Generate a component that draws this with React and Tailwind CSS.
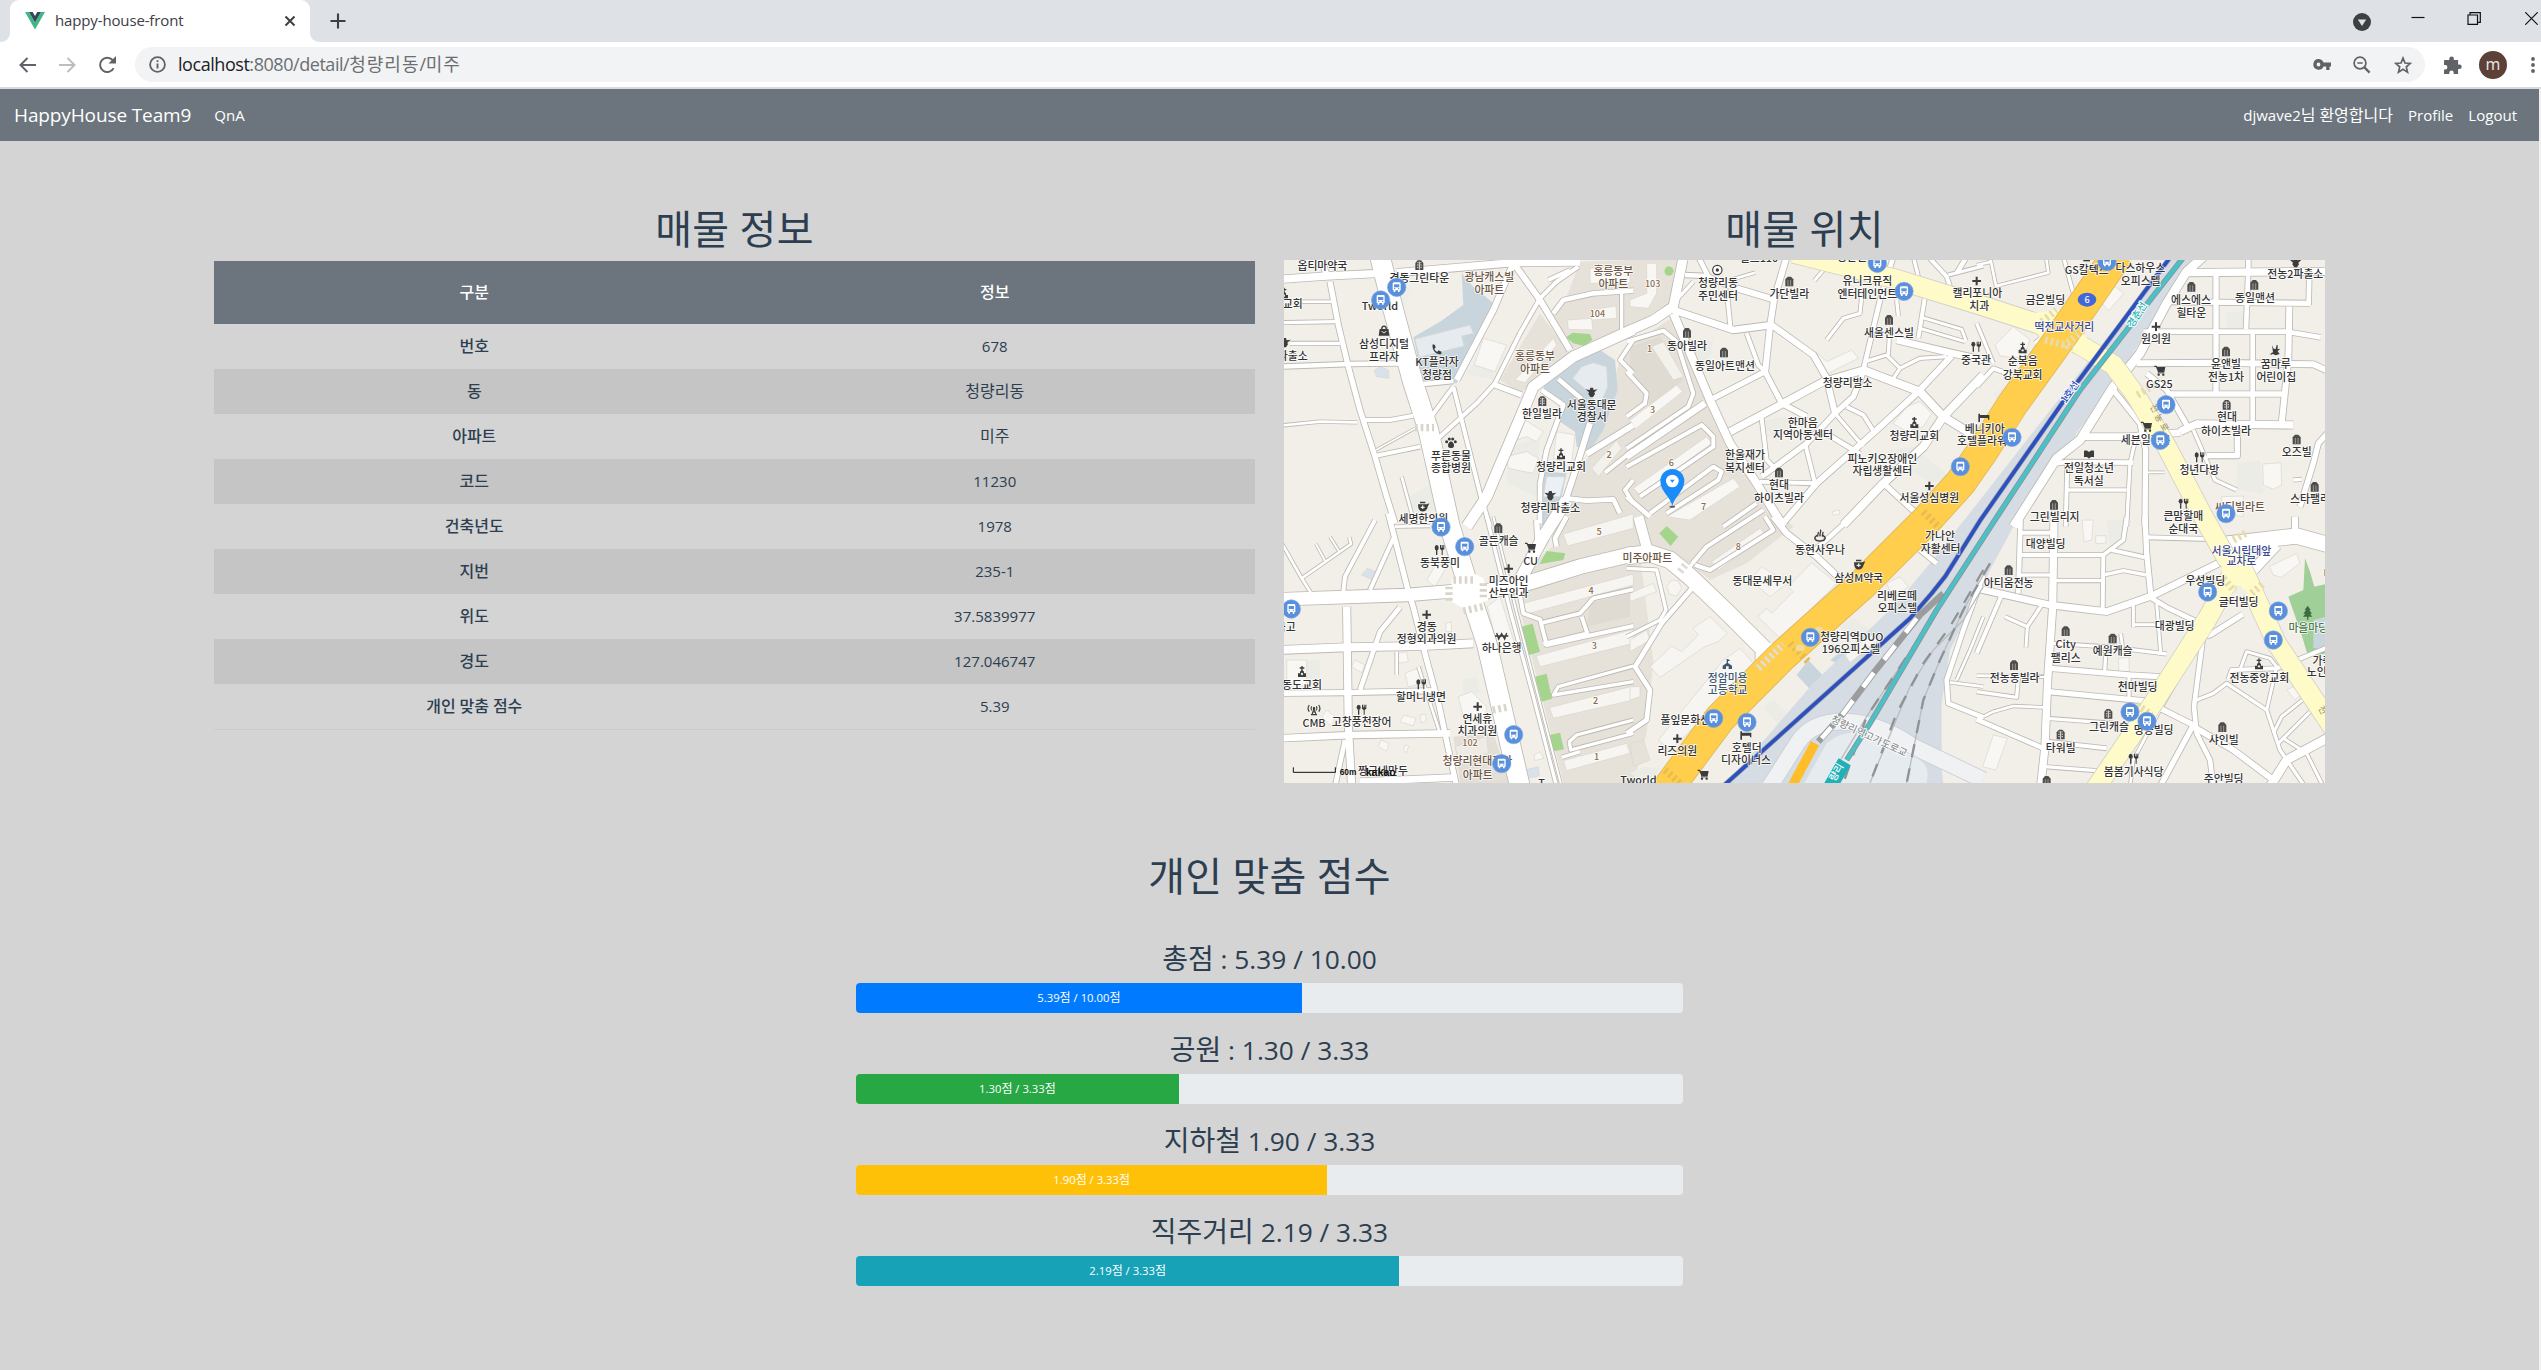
import React from "react";

const SANS = "font-['Open_Sans','Noto_Sans_CJK_KR',sans-serif]";

/* Latin runs are set slightly smaller than the Hangul beside them. */
function Mixed({ children }) {
  const runs = String(children).split(/([\uac00-\ud7a3]+)/).filter(Boolean);
  return (
    <span className="whitespace-pre">
      {runs.map((r, i) =>
        /[\uac00-\ud7a3]/.test(r) ? <span key={i}>{r}</span> : <span key={i} className="text-[0.94em]">{r}</span>
      )}
    </span>
  );
}

/* ------------------------------- browser ------------------------------- */

function TabStrip() {
  return (
    <div className="flex h-[42px] w-full items-end justify-between bg-[#dee1e6]">
      <div className="flex h-full items-end">
        <div className="h-2.5 w-2.5 bg-white">
          <div className="h-full w-full rounded-br-[9px] bg-[#dee1e6]" />
        </div>
        <div className="flex h-full w-[300px] items-center rounded-t-[9px] bg-white pl-[15px] pr-[14px]">
          <svg width="20" height="18" viewBox="0 0 20 18">
            <path d="M0 0h4l6 10.4L16 0h4L10 17.5z" fill="#41b883" />
            <path d="M4 0h3.7L10 4l2.300-4H16l-6 10.400z" fill="#35495e" />
          </svg>
          <span className="ml-[10px] flex-1 pb-px text-[15px] tracking-[-0.14px] text-[#3c4043]">happy-house-front</span>
          <svg width="12" height="12" viewBox="0 0 12 12" stroke="#3c4043" strokeWidth="2">
            <path d="M1.500 1.500l9 9M10.500 1.500l-9 9" />
          </svg>
        </div>
        <div className="h-2.5 w-2.5 bg-white">
          <div className="h-full w-full rounded-bl-[9px] bg-[#dee1e6]" />
        </div>
        <svg className="mb-[13px] ml-[10px]" width="16" height="16" viewBox="0 0 16 16" stroke="#3c4043" strokeWidth="2.100">
          <path d="M8 .5v15M.5 8h15" />
        </svg>
      </div>
      <div className="flex h-full items-start">
        <svg className="mt-[13px]" width="18" height="18" viewBox="0 0 18 18">
          <circle cx="9" cy="9" r="9" fill="#3c4043" />
          <path d="M4.800 6.500h8.400L9 13z" fill="#dee1e6" />
        </svg>
        <svg className="ml-[40px] mt-[11px]" width="14" height="13" viewBox="0 0 14 13" stroke="#111" strokeWidth="1.200">
          <path d="M0.500 6.500h13" />
        </svg>
        <svg className="ml-[42px] mt-[12px]" width="14" height="13" viewBox="0 0 14 13" stroke="#111" strokeWidth="1.200" fill="none">
          <path d="M1 3h9.500v9.400H1zM3 3V.7h10.300v9.600h-2.600" />
        </svg>
        <svg className="ml-[44px] mt-[12px]" width="13" height="13" viewBox="0 0 13 13" stroke="#111" strokeWidth="1.200">
          <path d="M.3.3l12.400 12.400M12.700.3L.3 12.700" />
        </svg>
        <div className="w-[3px]" />
      </div>
    </div>
  );
}

function Toolbar() {
  return (
    <div className="flex h-[47px] w-full items-start border-b-2 border-[#d9dbdf] bg-white pt-[5px]">
      <div className="flex h-[35px] w-[135px] shrink-0 items-center pl-[19px]">
        <svg width="17" height="16" viewBox="0 0 17 16" stroke="#5f6368" strokeWidth="2" fill="none">
          <path d="M17 8H2M8.500 1L1.500 8l7 7" />
        </svg>
        <svg className="ml-[23px]" width="17" height="16" viewBox="0 0 17 16" stroke="#bcbfc2" strokeWidth="2" fill="none">
          <path d="M0 8h15M8.500 1l7 7-7 7" />
        </svg>
        <svg className="ml-[22px]" width="20" height="18" viewBox="0 0 20 18" stroke="#5f6368" strokeWidth="2" fill="none">
          <path d="M15.600 12.300A7.200 7.200 0 1 1 14.600 4" />
          <path d="M18 0v7.500h-7.500z" fill="#5f6368" stroke="none" />
        </svg>
      </div>
      <div className="flex h-[35px] flex-1 items-center rounded-full bg-[#f1f3f4] pl-[14px] pr-[13px]">
        <svg width="17" height="17" viewBox="0 0 17 17" fill="none" stroke="#5f6368">
          <circle cx="8.500" cy="8.500" r="7.400" strokeWidth="1.800" />
          <path d="M8.500 7.500v5M8.500 4.300v1.800" strokeWidth="1.900" />
        </svg>
        <span className="ml-[12px] flex-1 pb-px text-[18px] leading-[34px] tracking-[-0.45px] text-[#202124]">
          localhost<span className="text-[#6b6f73]">:8080/detail/</span>
          <span className="tracking-[1px] text-[#6b6f73]">청량리동</span>
          <span className="text-[#6b6f73]">/</span>
          <span className="tracking-[1px] text-[#6b6f73]">미주</span>
        </span>
        <svg width="18" height="11" viewBox="0 0 18 11">
          <path d="M5.500 0a5.300 5.300 0 0 1 5 3.600H18v3.800h-1.500V11h-3.300V7.400h-2.700A5.300 5.300 0 1 1 5.500 0zm0 3.600a1.900 1.900 0 1 0 0 3.800 1.900 1.900 0 0 0 0-3.800z" fill="#5f6368" />
        </svg>
        <svg className="ml-[22px]" width="18" height="18" viewBox="0 0 18 18" stroke="#5f6368" fill="none">
          <circle cx="7" cy="7" r="5.900" strokeWidth="1.700" />
          <path d="M4.300 7h5.400" strokeWidth="1.500" />
          <path d="M11.400 11.400l5.200 5.200" strokeWidth="2.200" />
        </svg>
        <svg className="ml-[23px]" width="18" height="18" viewBox="0 0 18 18" stroke="#5f6368" strokeWidth="1.700" fill="none">
          <path d="M9 2.100l2 4.900 5.300.4-4 3.500 1.200 5.200L9 13.300l-4.500 2.800 1.200-5.200-4-3.500L7 7z" />
        </svg>
      </div>
      <div className="flex h-[35px] w-[116px] shrink-0 items-center pl-[18px]">
        <svg width="19" height="18" viewBox="0 0 19 18">
          <path d="M2 4h4.300V2.700a2.300 2.300 0 0 1 4.600 0V4h4.200v4.400h1.300a2.300 2.300 0 0 1 0 4.600h-1.300V18h-4.400v-1.300a2.200 2.200 0 0 0-4.400 0V18H1v-4.500h1.200a2.200 2.200 0 0 0 0-4.400H1V5a1 1 0 0 1 1-1z" fill="#5f6368" />
        </svg>
        <div className="ml-[17px] flex h-7 w-7 items-center justify-center rounded-full bg-[#5d4037] pb-0.5 text-[16px] leading-none text-[#efebe9]">m</div>
        <svg className="ml-[24px]" width="4" height="16" viewBox="0 0 4 16" fill="#5f6368">
          <circle cx="2" cy="2" r="1.900" />
          <circle cx="2" cy="8" r="1.900" />
          <circle cx="2" cy="14" r="1.900" />
        </svg>
      </div>
    </div>
  );
}

function NavBar() {
  return (
    <nav className="flex h-[52px] items-center bg-[#6c757d] pl-[14px] pr-[22px] text-[16px] text-white">
      <span className="text-[19px] tracking-[-0.12px]">HappyHouse Team9</span>
      <span className="ml-[23px]"><Mixed>QnA</Mixed></span>
      <div className="ml-auto flex gap-[15px]">
        <Mixed>djwave2님 환영합니다</Mixed>
        <Mixed>Profile</Mixed>
        <Mixed>Logout</Mixed>
      </div>
    </nav>
  );
}

/* --------------------------------- map --------------------------------- */

/* The map is drawn in six cells, each 1050 x 810 units (three units per pixel). */
const CELLS = [
  {
    at: [0, 0],
    areas: [
      ["#e6e2da", "660,390 780,190 870,310 720,430"],
      ["#e6e2da", "900,35 1050,30 1050,230 870,300 815,200 860,140"],
      ["#edeee8", "300,30 360,60 400,130 345,200"],
      ["#c9d5dd", "545,70 580,110 640,160 590,290 530,400 430,400 400,262 480,215 550,165"],
      ["#c9d5dd", "870,320 960,300 1005,330 1013,420 970,540 930,600 890,590 885,545 832,510 850,470 790,410"],
      ["#c9d5dd", "795,665 860,670 830,810 775,810"],
      ["#a5d58c", "858,262 878,248 930,252 937,270 912,288 880,280"],
      ["#ebece6", "590,330 650,340 640,390 560,370"],
      ["#ebece6", "690,590 780,560 770,740 680,700"],
      ["#ebece6", "385,740 460,700 480,780 400,790"],
    ],
    buildings: [
      ["#e6ebf0", "405,267 570,225 580,250 545,258 552,288 418,322"],
      ["#e6ebf0", "878,385 905,350 940,338 980,350 983,410 955,475 930,430"],
      ["#d9e2ea", "282,362 300,350 325,360 327,385 290,380"],
      ["#f8f7f4", "610,265 680,285 645,365 583,345"],
      ["#f8f7f4", "708,570 735,510 790,545 770,575 740,560"],
      ["#f8f7f4", "680,620 740,605 775,625 760,670 685,655"],
      ["#f8f7f4", "830,545 885,555 875,640 820,625"],
      ["#f8f7f4", "862,210 935,205 938,240 865,238"],
      ["#f8f7f4", "930,180 1008,168 1010,205 935,210"],
      ["#f8f7f4", "930,55 1050,45 1050,100 930,100"],
      ["#f8f7f4", "705,390 820,265 830,285 735,398"],
      ["#f3f1ec", "935,655 1010,570 1025,595 955,680"],
      ["#eaf0f5", "800,680 855,680 840,740 790,740"],
    ],
    roads: [
      [22, "0,88 140,78 300,70"],
      [22, "350,68 560,50 700,38 900,36"],
      [18, "140,75 125,30"],
      [16, "150,95 175,225 205,350 240,480 282,610 320,740 345,820"],
      [8, "60,155 155,155"],
      [10, "0,218 165,215"],
      [10, "30,280 180,280"],
      [14, "0,350 210,342 370,340"],
      [8, "0,527 120,515 232,517"],
      [12, "255,510 330,510 400,497"],
      [12, "285,618 420,590"],
      [5, "288,600 405,535"],
      [14, "430,402 520,393"],
      [18, "530,390 640,180 700,40"],
      [12, "450,505 520,410"],
      [12, "520,410 545,510 600,730 630,830"],
      [12, "475,565 590,460 645,400 720,250 780,145 830,95 895,50"],
      [12, "805,90 870,60"],
      [18, "700,38 780,150 870,300"],
      [16, "645,405 725,435"],
      [32, "1060,238 880,320 760,410 705,540 620,740 560,830"],
      [14, "820,190 850,150 940,130 1060,122"],
      [10, "1025,130 1025,240"],
      [8, "365,680 395,790"],
      [14, "835,387 905,447"],
      [14, "785,420 850,465 800,600 780,700 780,820"],
      [18, "930,520 880,680 860,740 800,830"],
      [18, "920,612 1060,525"],
      [12, "975,668 1060,600"],
      [14, "860,745 920,752 1000,748 1020,790"],
      [12, "1060,270 1020,330 1060,370"],
      [12, "1060,690 1035,720 1060,760"],
    ],
    icons: [
      ["apt", 418, 45], ["bag", 312, 243], ["phone", 470, 297], ["apt", 787, 453], ["police", 935, 427],
      ["paw", 513, 578], ["church", 843, 612], ["police", 811, 737], ["pot", 428, 770], ["church", 12, 130], ["police", 14, 278],
    ],
    labels: [
      [127, 47, "옵티마약국"], [418, 83, "경동그린타운"], [628, 82, "광남캐스빌", "b"], [628, 121, "아파트", "b"],
      [1000, 62, "홍릉동부", "b"], [1000, 101, "아파트", "b"], [300, 168, "Tworld"], [38, 161, "교회"], [38, 317, "파출소"],
      [312, 283, "삼성디지털"], [312, 320, "프라자"], [471, 336, "KT플라자"], [471, 374, "청량점"],
      [765, 319, "홍릉동부", "b"], [765, 358, "아파트", "b"], [786, 491, "한일빌라"], [935, 466, "서울동대문"], [935, 502, "경찰서"],
      [513, 619, "푸른동물"], [513, 655, "종합병원"], [843, 652, "청량리교회"], [811, 774, "청량리파출소"], [430, 806, "세명한의원"],
      [952, 188, "104", "n"], [987, 613, "2", "n"],
    ],
    stops: [[350, 112], [302, 150]],
  },
  {
    at: [1050, 0],
    areas: [
      ["#e6e2da", "0,30 145,30 120,160 0,230"],
      ["#a5d58c", "103,62 108,52 118,49 128,54 131,64 126,74 116,78 106,73"],
      ["#ebece6", "180,280 250,270 240,330 200,330"],
      ["#ebece6", "400,510 470,500 480,560 410,560"],
      ["#ebece6", "780,600 850,590 960,680 900,700 830,650"],
      ["#dfdbd2", "0,290 90,260 110,290 160,390 60,470 50,430 0,370"],
    ],
    buildings: [
      ["#f8f7f4", "50,40 80,40 80,130 55,175 0,170 0,150 50,130"],
      ["#f3f1ec", "65,290 100,275 160,380 130,390"],
      ["#f8f7f4", "0,510 140,405 158,425 0,550"],
      ["#f8f7f4", "10,715 230,560 245,580 30,735"],
      ["#f8f7f4", "110,800 310,685 330,710 180,810"],
      ["#f8f7f4", "557,305 590,335 665,300 685,325 595,370"],
      ["#f8f7f4", "790,520 830,470 870,455 905,490 880,530 830,545"],
      ["#f8f7f4", "607,785 628,780 630,792 610,796"],
    ],
    roads: [
      [28, "160,20 130,170 70,210 -10,245"],
      [14, "205,20 235,80 300,110"],
      [14, "165,75 230,78"],
      [10, "190,95 130,160"],
      [12, "290,120 302,238"],
      [20, "130,180 310,240 425,225"],
      [18, "310,112 430,148"],
      [8, "375,68 300,90"],
      [18, "470,20 432,150 420,230 405,370"],
      [18, "425,225 550,315 590,385 615,490"],
      [12, "350,250 385,345 405,365"],
      [24, "130,190 240,450 300,580 380,700 460,830"],
      [16, "250,445 405,365 455,460 530,500"],
      [22, "300,545 460,460 580,395 700,360"],
      [12, "395,505 410,630 440,660"],
      [16, "395,680 530,580 615,490 670,440 700,365"],
      [12, "525,580 555,700 390,695"],
      [18, "450,830 560,700 740,540 860,430 965,318"],
      [14, "700,360 750,150 790,20"],
      [24, "700,360 870,425 940,500 1060,575"],
      [20, "800,270 960,308 1060,330"],
      [10, "705,335 770,315 810,355 870,325 950,320"],
      [10, "810,355 790,385"],
      [10, "778,260 775,315"],
      [12, "650,470 700,495 735,550"],
      [10, "615,490 700,590"],
      [14, "580,545 690,612"],
      [9, "585,55 553,92"],
      [10, "695,140 690,190 640,205 590,270"],
      [10, "800,150 805,198"],
      [12, "885,140 865,265"],
      [9, "875,202 995,238 1008,272"],
      [9, "870,235 1005,275"],
      [10, "850,20 865,80"],
      [12, "895,20 950,80 960,110"],
      [10, "955,75 1060,48"],
      [14, "1010,20 980,70"],
      [24, "1060,375 940,500 880,590 760,700 640,825"],
      [16, "760,700 870,800"],
      [12, "-10,275 100,242 140,275 190,430 175,470 -10,595"],
      [12, "-10,365 50,430 45,460 -10,500"],
      [20, "-10,620 225,460"],
      [12, "-10,650 215,525 250,560 250,590 30,740"],
      [12, "60,790 250,650 275,665 265,690 110,790"],
      [14, "-10,740 60,800"],
      [12, "280,830 380,760"],
    ],
    icons: [
      ["target", 262, 60], ["apt2", 478, 94], ["apt2", 171, 248], ["apt2", 282, 307], ["apt2", 777, 209], ["plus", 1040, 93],
      ["church", 853, 518], ["apt2", 447, 667], ["plus", 898, 708], ["fork", 1038, 290],
    ],
    labels: [
      [387, 24, "빌드110"], [680, 20, "청산빌딩"], [264, 99, "청량리동"], [264, 138, "주민센터"], [478, 132, "가단빌라"],
      [712, 94, "유니크뮤직"], [712, 131, "엔터테인먼트"], [1042, 130, "캘리포니아"], [1048, 167, "치과"], [171, 288, "동아빌라"],
      [285, 347, "동일아트맨션"], [777, 248, "새울센스빌"], [1038, 329, "중국관"], [653, 399, "청량리발소"],
      [518, 519, "한마음"], [519, 556, "지역아동센터"], [853, 557, "청량리교회"], [345, 616, "한울재가"], [345, 653, "복지센터"],
      [757, 627, "피노키오장애인"], [757, 664, "자립생활센터"], [447, 706, "현대"], [447, 745, "하이츠빌라"], [898, 745, "서울성심병원"],
      [68, 100, "103", "n"], [59, 295, "1", "n"], [68, 477, "3", "n"], [124, 637, "6", "n"], [221, 767, "7", "n"],
    ],
    stops: [[742, 40], [822, 124], [991, 650]],
  },
  {
    at: [2100, 0],
    areas: [
      ["#ebece6", "770,640 840,630 850,730 770,720"],
      ["#ebece6", "740,190 800,180 810,240 740,240"],
      ["#ebece6", "40,430 70,415 100,440 60,470"],
    ],
    buildings: [
      ["#f8f7f4", "45,285 100,230 150,270 130,325 60,318"],
      ["#f8f7f4", "360,150 405,110 432,130 385,183"],
      ["#f8f7f4", "848,642 903,638 905,705 880,718 850,705"],
      ["#f8f7f4", "725,740 790,738 790,800 725,790"],
    ],
    roads: [
      [8, "30,20 48,108 205,68 198,20"],
      [8, "-10,45 35,35"],
      [10, "250,20 280,130"],
      [26, "670,20 620,65 560,160 480,310 400,410 300,570 230,625 100,830"],
      [22, "620,68 1060,64"],
      [16, "570,155 990,160"],
      [14, "805,20 805,60 798,238"],
      [16, "708,70 708,430"],
      [14, "988,70 986,165"],
      [14, "490,245 708,245 920,245 1022,262"],
      [18, "928,170 925,330 905,520"],
      [18, "470,340 700,338 1000,343 1060,370"],
      [14, "818,250 818,520"],
      [16, "570,432 910,432"],
      [22, "600,545 650,522 940,525"],
      [16, "500,370 560,420 620,525"],
      [20, "310,560 450,560 600,548"],
      [16, "400,420 480,520 497,600 495,830"],
      [10, "465,575 450,640 440,830"],
      [14, "225,640 260,636 460,638"],
      [12, "262,640 257,830"],
      [10, "257,720 440,720"],
      [6, "500,667 553,667"],
      [10, "640,540 705,690 770,720"],
      [16, "680,617 772,617 772,530"],
      [16, "1060,530 1015,580 1000,640 960,770"],
      [10, "940,690 965,688"],
      [12, "-10,410 40,355 95,375"],
      [10, "-10,220 40,340"],
      [12, "190,260 165,280"],
    ],
    icons: [
      ["dot", 320, 28], ["apt2", 634, 110], ["apt2", 823, 104], ["police", 947, 38], ["plus", 528, 230], ["church", 128, 294],
      ["apt2", 738, 304], ["kid", 886, 300], ["cart", 540, 361], ["apt", 740, 464], ["cart", 500, 529], ["apt2", 950, 568],
      ["book", 327, 614], ["fork", 658, 622], ["apt2", 1004, 710], ["apt2", 222, 764], ["fork", 610, 761], ["bed", 12, 503],
    ],
    labels: [
      [320, 60, "GS칼텍스"], [481, 55, "다스하우스"], [482, 93, "오피스텔"], [946, 73, "전농2파출소"], [633, 149, "에스에스"],
      [634, 188, "힐타운"], [825, 143, "동일맨션"], [196, 151, "금은빌딩"], [253, 231, "떡전교사거리", "v"], [528, 266, "원의원"],
      [128, 333, "순복음"], [128, 374, "강북교회"], [738, 342, "윤앤빌"], [738, 381, "전농1차"], [887, 342, "꿈마루"], [889, 381, "어린이집"],
      [538, 401, "GS25"], [741, 502, "현대"], [738, 542, "하이츠빌라"], [497, 571, "세븐일레븐"], [14, 537, "베니키아"], [6, 574, "호텔플라워"],
      [950, 606, "오즈빌"], [327, 654, "전일청소년"], [326, 692, "독서실"], [658, 661, "청년다방"], [1005, 748, "스타팰리스"],
      [780, 772, "씨티빌라트", "b"], [224, 801, "그린빌리지"], [610, 799, "큰맘할매"],
    ],
    stops: [[381, 35], [558, 464], [541, 571], [96, 562], [738, 791]],
  },
  {
    at: [0, 810],
    areas: [
      ["#a5d58c", "778,133 800,93 856,100 850,120"],
      ["#a5d58c", "725,320 758,311 780,395 745,406"],
      ["#a5d58c", "765,470 800,461 816,536 785,545"],
      ["#a5d58c", "808,645 840,638 852,688 820,694"],
      ["#ebece6", "70,420 120,420 120,500 75,500"],
      ["#ebece6", "550,480 590,470 600,520 550,520"],
      ["#e3dfd7", "520,650 640,640 690,789 540,789"],
      ["#c9d5dd", "785,0 830,0 785,70"],
      ["#dfdbd2", "930,250 1050,220 1050,290 920,320"],
    ],
    buildings: [
      ["#d9e2ea", "245,165 262,145 287,155 280,180"],
      ["#f8f7f4", "440,180 470,130 500,140 465,200"],
      ["#f8f7f4", "20,420 80,420 80,500 20,490"],
      ["#f8f7f4", "215,440 225,420 255,435 245,458"],
      ["#f8f7f4", "355,400 380,395 385,425 355,430"],
      ["#f8f7f4", "375,460 425,440 430,490 385,500"],
      ["#f8f7f4", "497,310 513,306 515,335 498,335"],
      ["#f8f7f4", "622,260 660,230 710,390 660,400 640,330"],
      ["#f8f7f4", "535,530 575,515 620,560 615,600 550,590"],
      ["#f8f7f4", "125,590 140,570 165,590 155,620"],
      ["#f8f7f4", "360,605 372,585 408,595 400,618"],
      ["#f8f7f4", "420,585 437,583 438,605 423,608"],
      ["#f8f7f4", "295,680 303,660 327,670 320,694"],
      ["#f8f7f4", "370,690 375,675 386,678 380,698"],
      ["#eeebe5", "525,680 620,650 625,700 540,730"],
      ["#d9e2ea", "733,750 775,740 778,768 738,775"],
      ["#f8f7f4", "762,705 780,695 792,715 765,722"],
      ["#f6f5f1", "850,42 1060,-18 1060,25 862,78"],
      ["#f6f5f1", "730,250 1060,162 1060,195 740,282"],
      ["#f6f5f1", "768,408 1060,328 1060,370 780,440"],
      ["#f6f5f1", "808,563 1060,498 1060,540 820,595"],
      ["#f6f5f1", "850,722 1040,670 1050,700 860,752"],
    ],
    roads: [
      [8, "0,60 65,175 95,222"],
      [8, "65,175 213,72 208,52"],
      [6, "108,72 135,122"],
      [6, "150,50 178,95"],
      [12, "285,0 195,170 190,215"],
      [12, "340,55 270,210"],
      [16, "325,-20 385,215 400,262 440,420 478,560 497,650 530,800"],
      [8, "345,20 450,18"],
      [38, "0,238 380,225 540,212"],
      [44, "600,218 740,190 900,140 1060,102"],
      [22, "200,260 202,400 205,620 215,800"],
      [24, "0,390 200,382 430,378 580,370"],
      [14, "360,262 300,335 240,510"],
      [16, "0,520 190,518 470,512"],
      [20, "0,655 215,645 510,640"],
      [14, "195,660 165,800"],
      [20, "240,785 530,772"],
      [10, "620,-10 690,270 760,530 830,800"],
      [6, "640,-10 708,270 775,530 845,800"],
      [36, "860,-60 790,50 715,190"],
      [16, "770,0 775,90"],
      [8, "350,395 350,465"],
      [8, "415,440 480,640"],
      [12, "715,200 730,280 780,298 800,375 1060,318"],
      [12, "780,310 900,280 940,235 1060,208"],
      [12, "905,290 922,340 790,372"],
      [10, "1060,438 835,500 820,525 1060,485"],
      [10, "1060,600 890,645 868,665 872,690 1060,640"],
      [10, "845,712 900,695"],
      [14, "830,80 825,55 860,-10"],
    ],
    icons: [
      ["fork", 478, 90], ["apt2", 655, 24], ["cart", 752, 82], ["plus", 686, 146], ["plus", 440, 284], ["won", 665, 348],
      ["church", 66, 455], ["fork", 423, 493], ["tower", 102, 569], ["fork", 244, 569], ["plus", 593, 560],
    ],
    labels: [
      [480, 129, "동북풍미"], [656, 62, "골든캐슬"], [752, 123, "CU"], [686, 183, "미즈아인"], [686, 220, "산부인과"],
      [440, 321, "경동"], [440, 358, "정형외과의원"], [17, 321, "금고"], [665, 385, "하나은행"], [66, 496, "동도교회"],
      [423, 531, "할머니냉면"], [102, 608, "CMB"], [245, 607, "고창풍천장어"], [592, 597, "연세휴"], [592, 633, "치과의원"],
      [592, 724, "청량리현대홈타", "b"], [593, 764, "아파트", "b"], [309, 752, "짱구네만두"], [570, 667, "102", "n"],
      [957, 33, "5", "n"], [933, 210, "4", "n"], [943, 375, "3", "n"], [947, 540, "2", "n"], [950, 707, "1", "n"], [785, 789, "T"],
    ],
    stops: [[483, 21], [554, 80], [34, 267], [701, 644], [665, 731]],
  },
  {
    at: [1050, 810],
    areas: [
      ["#a5d58c", "88,40 110,18 145,50 122,78"],
      ["#ebece6", "0,760 40,740 90,745 60,789"],
      ["#ebece6", "400,560 430,540 475,585 445,615"],
      ["#c9d5dd", "500,465 535,420 582,470 545,513"],
      ["#c9d5dd", "600,420 640,390 670,420 640,438"],
      ["#ebece6", "630,320 670,290 720,330 680,370"],
    ],
    buildings: [
      ["#f6f5f1", "245,125 390,25 410,50 265,150"],
      ["#f6f5f1", "383,290 410,265 425,280 490,215 475,200 545,128 620,190 500,312 455,362 440,345"],
      ["#f6f5f1", "360,180 395,140 435,165 480,185 420,230"],
      ["#f6f5f1", "60,440 125,378 155,395 205,345 188,325 240,290 292,340 265,365 225,380 90,472"],
      ["#f6f5f1", "85,660 280,420 330,385 380,440 120,690"],
      ["#f6f5f1", "110,200 125,180 145,182 155,205 140,228 118,222"],
      ["#f6f5f1", "0,220 70,190 80,215 0,245"],
      ["#f6f5f1", "0,360 50,330 60,360 0,395"],
      ["#f6f5f1", "0,500 30,500 30,530 0,540"],
      ["#e6e2da", "0,670 40,660 60,720 10,740"],
      ["#f6f5f1", "645,405 720,345 745,360 660,428"],
      ["#f6f5f1", "770,190 810,170 835,200 790,235"],
    ],
    roads: [
      [30, "25,-10 55,100"],
      [50, "-10,108 60,100 120,120 180,170 300,285 420,405"],
      [12, "170,150 230,80 400,-30"],
      [12, "195,135 240,150 430,30 405,-10"],
      [18, "430,-10 470,40 560,110 650,195"],
      [14, "555,90 655,0"],
      [14, "190,200 95,310 15,440 60,510 50,600 -10,640"],
      [10, "-10,145 80,150 108,270 90,300 -10,350"],
      [14, "1060,165 1000,330 950,480 955,550 1060,592"],
      [8, "960,487 1060,500"],
      [14, "870,90 920,130"],
      [8, "980,480 1020,390 1060,290"],
      [12, "382,400 384,440"],
    ],
    icons: [
      ["spa", 570, 46], ["pot", 686, 134], ["school", 292, 433], ["plus", 142, 656], ["bed", 348, 646], ["cart", 220, 763],
    ],
    labels: [
      [570, 90, "동현사우나"], [686, 173, "삼성M약국"], [930, 48, "가나안"], [932, 86, "자활센터"], [397, 184, "동대문세무서"],
      [801, 227, "리베르떼"], [802, 263, "오피스텔"], [665, 350, "청량리역DUO"], [663, 387, "196오피스텔"],
      [293, 473, "정암미용", "s"], [293, 509, "고등학교", "s"], [166, 601, "풀잎문화센"], [142, 692, "리즈의원"], [350, 683, "호텔더"],
      [348, 720, "디자이너스"], [52, 115, "미주아파트", "b"], [325, 77, "8", "n"], [25, 779, "Tworld"],
    ],
    stops: [[541, 352], [251, 595], [351, 607]],
  },
  {
    at: [2100, 810],
    areas: [
      ["#a0cf98", "975,115 990,155 1003,200 1040,192 1040,400 985,412 965,345 925,230 970,210"],
      ["#c9d5dd", "1000,300 1040,290 1040,385 1000,385"],
      ["#ebece6", "380,0 440,0 430,50 390,80"],
    ],
    buildings: [
      ["#f8f7f4", "868,140 950,100 960,130 905,172 880,165"],
      ["#f8f7f4", "306,0 340,0 335,60 312,66"],
      ["#f8f7f4", "347,47 378,47 378,70 347,70"],
      ["#f8f7f4", "415,415 447,412 448,455 417,455"],
      ["#f8f7f4", "8,740 40,645 82,655 48,750"],
      ["#f8f7f4", "920,510 940,500 965,520 945,540"],
    ],
    roads: [
      [16, "495,-10 500,100 513,232"],
      [14, "122,-10 115,220"],
      [12, "120,38 225,38"],
      [22, "222,-10 218,260 203,480 195,680 182,800"],
      [12, "120,105 370,105 430,60 440,-10"],
      [12, "370,105 368,270"],
      [10, "120,165 215,165"],
      [10, "220,182 370,182"],
      [10, "370,165 430,152 500,165"],
      [12, "395,90 495,112"],
      [12, "500,52 720,58"],
      [46, "740,72 950,48 1060,78"],
      [18, "945,-10 945,50"],
      [20, "-10,205 210,255 380,275 515,228 740,118"],
      [14, "515,235 560,262 650,305"],
      [9, "530,250 542,400"],
      [9, "460,255 460,322"],
      [9, "462,314 530,314"],
      [12, "65,225 -10,400"],
      [10, "185,255 142,320 75,290"],
      [9, "142,320 138,382"],
      [10, "220,370 400,382 560,402"],
      [10, "378,390 374,455"],
      [9, "422,340 430,400"],
      [16, "210,445 450,465 540,470"],
      [10, "447,470 447,540"],
      [16, "205,515 520,545"],
      [8, "-10,467 195,470"],
      [10, "-10,515 110,532 115,475"],
      [14, "-10,598 190,685"],
      [8, "10,590 40,575 100,558 190,562"],
      [10, "200,595 400,610"],
      [12, "200,665 380,685"],
      [10, "195,740 350,752"],
      [16, "535,562 640,615 540,800"],
      [14, "670,345 642,560 650,640 690,720 700,800"],
      [16, "665,350 690,345 788,283"],
      [8, "665,355 540,570 460,720 450,800"],
      [18, "640,620 760,690 880,780"],
      [10, "650,540 700,520 740,490 860,570 900,690 920,720"],
      [26, "1060,645 920,720 870,800"],
      [10, "920,720 975,800"],
      [12, "745,480 755,450 890,445 1060,375"],
      [9, "780,450 800,395 870,415 890,440 860,570"],
      [9, "980,530 905,590 880,640"],
      [9, "1000,565 895,670"],
      [9, "910,655 980,700 1030,800"],
      [30, "820,150 890,75"],
    ],
    icons: [
      ["apt2", 86, 150], ["apt2", 257, 333], ["apt2", 398, 355], ["apt2", 102, 435], ["tree", 983, 277], ["church", 837, 432],
      ["apt", 385, 581], ["apt", 242, 643], ["apt2", 727, 621], ["fork", 460, 716], ["apt2", 200, 782],
    ],
    labels: [
      [610, 27, "순대국"], [197, 73, "대양빌딩"], [86, 189, "아티움전농"], [784, 94, "서울시립대앞", "v"], [784, 124, "교차로", "v"],
      [676, 184, "우성빌딩"], [776, 246, "글터빌딩"], [584, 319, "대광빌딩"], [257, 373, "City"], [257, 413, "팰리스"],
      [398, 394, "예원캐슬"], [985, 325, "마을마당", "g"], [1042, 422, "가족회"], [1040, 457, "노인센터"], [104, 474, "전농동빌라"],
      [838, 473, "전농중앙교회"], [473, 501, "천마빌딩"], [387, 620, "그린캐슬"], [521, 630, "명승빌딩"], [242, 683, "타워빌"],
      [731, 660, "샤인빌"], [461, 757, "봄봄기사식당"], [731, 776, "주안빌딩"], [1046, 162, "마"],
    ],
    stops: [[683, 216], [895, 273], [880, 360], [450, 576], [501, 604]],
  },
];

const INK = { b: "#6b5645", n: "#8a6a4c", v: "#3a4a94", s: "#3f5872", g: "#4c7a4e" };

function MapIcon({ kind }) {
  switch (kind) {
    case "apt":
    case "apt2":
      return (
        <>
          <path d="M-12 15V-6l7-8H5l7 8v21z" fill="#4d4d4d" />
          {kind === "apt" ? (
            <path d="M-6-7h3M3-7h3M-7 0h4M3 0h4M-7 7h4M3 7h4M0-10v24" stroke="#e9e6df" strokeWidth="3" />
          ) : (
            <path d="M-4-4v19M4-4v19" stroke="#9b9a96" strokeWidth="3" />
          )}
        </>
      );
    case "plus":
      return <path d="M0-13v26M-13 0h26" stroke="#3c3c3c" strokeWidth="6" />;
    case "church":
      return (
        <>
          <path d="M-2-17h4v4h5v4H2v5l4 4v5h6v11h-24V5h6V0l4-4v-5h-5v-4h5z" fill="#3c3c3c" />
          <circle cy="7" r="3.500" fill="#e9e6df" />
        </>
      );
    case "police":
      return <path d="M-18-9l12 2 2-7h8l2 7 12-2-10 9 2 5-6 9h-8l-6-9 2-5z" fill="#3c3c3c" />;
    case "cart":
      return (
        <g fill="#3c3c3c">
          <path d="M-17-14h7l2 4h24l-3 15H-6l-6-15h-5z" />
          <path d="M-7 6h20v3H-7z" />
          <circle cx="-4" cy="13" r="3.500" />
          <circle cx="10" cy="13" r="3.500" />
        </g>
      );
    case "fork":
      return (
        <g fill="#3c3c3c">
          <ellipse cx="-8" cy="-7" rx="6" ry="8" />
          <path d="M-10 0h4v15h-4zM2-15h3v8h2v-8h3v8h2v-8h3v12l-5 4v14H7V1L2-3z" />
        </g>
      );
    case "bag":
      return (
        <>
          <path d="M-13-6h26l3 20h-32z" fill="#3c3c3c" />
          <path d="M-7-4c0-14 14-14 14 0" fill="none" stroke="#3c3c3c" strokeWidth="4" />
          <path d="M-6 0c2 7 10 7 12 0" fill="none" stroke="#fff" strokeWidth="3" />
        </>
      );
    case "phone":
      return <path d="M-12-14l7 2 2 8-4 3c2 5 5 8 9 9l4-4 8 4v7c-10 5-30-8-26-29z" fill="#3c3c3c" />;
    case "paw":
      return (
        <g fill="#3c3c3c">
          <circle cx="-13" cy="-3" r="4.500" />
          <circle cx="-5" cy="-11" r="4.500" />
          <circle cx="5" cy="-11" r="4.500" />
          <circle cx="13" cy="-3" r="4.500" />
          <path d="M0-4c8 3 11 12 8 17-3 4-13 4-16 0-3-5 0-14 8-17z" />
        </g>
      );
    case "pot":
      return (
        <>
          <path d="M-8-15H8v5h-16zM-14-7h26l8-3-5 10c-3 18-24 20-28 3z" fill="#3c3c3c" />
          <path d="M0-4v11M-6 2H6" stroke="#f2efe9" strokeWidth="3.500" />
        </>
      );
    case "target":
      return (
        <>
          <circle r="14" fill="#fff" stroke="#3c3c3c" strokeWidth="3.500" />
          <circle r="5" fill="#3c3c3c" />
        </>
      );
    case "kid":
      return <path d="M-10-14l5 10 6 1 3-12 3 0v13l8-2-8 8 6 8-12 4-8-4-8 3 2-5 6-3z" fill="#3c3c3c" />;
    case "book":
      return <path d="M-15-12C-8-14-3-12 0-8c3-4 8-6 15-4v20C8 6 3 8 0 12c-3-4-8-6-15-4z" fill="#3c3c3c" />;
    case "bed":
      return <path d="M-17-12h5v4h28v14h-4V1h-24v12h-5z" fill="#3c3c3c" />;
    case "won":
      return <path d="M-15-9l6 18L0-7l9 16 6-18M-20 0h40" fill="none" stroke="#3c3c3c" strokeWidth="4" />;
    case "tower":
      return (
        <g fill="none" stroke="#3c3c3c" strokeWidth="3.500">
          <path d="M-6 15L0-4l6 19M-9 15H9M-4 7h8" />
          <path d="M-7-10c-3 4-3 8 0 12M7-10c3 4 3 8 0 12M-14-14c-5 7-5 14 0 20M14-14c5 7 5 14 0 20" />
          <circle cy="-4" r="2" />
        </g>
      );
    case "spa":
      return (
        <g fill="none" stroke="#3c3c3c" strokeWidth="4">
          <path d="M-9 0c-12 8-6 17 9 17S21 8 9 0" />
          <path d="M-6-10c4 4-4 8 0 14M1-17c5 6-5 12 0 20M8-10c4 4-4 8 0 14" />
        </g>
      );
    case "school":
      return <path d="M0-16l9 4-7 3v5l12 8v10H4V6h-8v8h-10V4L-2-4v-12z" fill="#3f5872" />;
    case "tree":
      return <path d="M0-20l9 13H5l8 11H7l7 9H2v9h-4v-9h-12l7-9h-6l8-11h-4z" fill="#3f6b42" />;
    default:
      return <path d="M-10-8h20V6h-20z" fill="#3c3c3c" />;
  }
}

function BusStop() {
  return (
    <>
      <circle r="27.500" fill="#5a8fdc" stroke="#7ba5e4" strokeWidth="2" />
      <path d="M-12-10c0-4 2-5 5-5H7c3 0 5 1 5 5v19h-3v5H4V9h-8v5h-5V9h-3z" fill="#fff" />
      <path d="M-8-9H8V0H-8z" fill="#5a8fdc" />
      <path d="M-8 4h4M4 4h4" stroke="#5a8fdc" strokeWidth="3" />
    </>
  );
}

const cellShift = (c) => `translate(${c.at[0]} ${c.at[1]})`;
const TRUNK = "300,20 340,180 400,400 445,540 510,830 550,960 580,1060 620,1180 720,1610";
const YELLOW = "1540,10 1850,88 2100,165 2270,220 2400,285 2500,345 2570,440 2660,590 2770,800 2840,925 2890,960 2990,1180 3170,1450";
const YELLOW_BRANCH = "2880,930 2780,1110 2600,1390 2430,1640";
const ORANGE = "2515,10 2340,265 2198,462 2110,600 2040,700 1940,810 1745,1005 1640,1098 1510,1215 1320,1405 1160,1620";
const RAIL_BLUE = "2672,20 2360,440 2100,812 1995,980 1955,1030 1890,1105 1330,1608";
const RAIL_TEAL = "2712,20 2400,420 2135,825 1970,1080 1770,1420 1700,1530";

function LocationMap() {
  return (
    <svg className="block h-[523px] w-full" viewBox="12 30 3123 1569" preserveAspectRatio="none" fontFamily="'Noto Sans CJK KR', sans-serif" fontWeight="500">
      <rect x="12" y="30" width="3123" height="1569" fill="#f2efe9" />
      <polygon
        points="860,745 930,610 1030,300 1180,200 1290,450 1350,570 1450,740 1540,830 1400,940 1290,990 1240,950 1080,920 1120,1230 1100,1450 1060,1599 850,1599 700,1000 770,930 830,880"
        fill="#e6e2da"
      />
      {CELLS.map((c, i) => (
        <g key={i} transform={cellShift(c)}>
          {c.areas.map((a, k) => <polygon key={k} fill={a[0]} points={a[1]} />)}
        </g>
      ))}
      <polygon
        points="2670,30 2740,30 2520,370 2390,550 2370,600 2330,620 2200,830 2130,960 2010,1200 1985,1360 1985,1560 1990,1599 1340,1599 1600,1300 1850,1060 1950,940 2100,750 2420,340"
        fill="#d5dce3"
      />
      <g fill="none" strokeLinejoin="round" strokeLinecap="butt">
        {CELLS.map((c, i) => (
          <g key={i} transform={cellShift(c)} stroke="#d9d5cd" strokeWidth="2">
            {c.buildings.map((b, k) => <polygon key={k} fill={b[0]} points={b[1]} />)}
          </g>
        ))}
        {CELLS.map((c, i) => (
          <g key={i} transform={cellShift(c)} stroke="#bcb9b3">
            {c.roads.map((r, k) => <polyline key={k} points={r[1]} strokeWidth={r[0] + 5} />)}
          </g>
        ))}
        <polyline points={TRUNK} stroke="#bcb9b3" strokeWidth="64" />
        {CELLS.map((c, i) => (
          <g key={i} transform={cellShift(c)} stroke="#ffffff">
            {c.roads.map((r, k) => <polyline key={k} points={r[1]} strokeWidth={r[0]} />)}
          </g>
        ))}
        <polyline points={TRUNK} stroke="#ffffff" strokeWidth="59" />
        <polygon points="1430,1180 1530,1178 1450,1270 1430,1230" fill="#fff" />
        <polygon points="515,990 560,960 610,985 625,1050 560,1080 515,1055" fill="#fff" />

        <g stroke="#d2cfc8">
          <polyline points={YELLOW} strokeWidth="62" />
          <polyline points={YELLOW_BRANCH} strokeWidth="62" />
        </g>
        <g stroke="#fffbc9">
          <polyline points={YELLOW} strokeWidth="57" />
          <polyline points={YELLOW_BRANCH} strokeWidth="57" />
        </g>
        <polygon points="2250,190 2340,180 2420,260 2370,310 2290,290" fill="#fffbc9" />
        <polygon points="2820,900 2900,900 2930,1000 2880,1010 2830,1000" fill="#fffbc9" />
        <path d="M2840,1055 Q2870,985 2905,1030" fill="#f2efe9" />

        <path d="M1450,1640 L1555,1475 Q1600,1410 1700,1415 T1900,1490 L2110,1590" stroke="#c9ced4" strokeWidth="52" />
        <path d="M1450,1640 L1555,1475 Q1600,1410 1700,1415 T1900,1490 L2110,1590" stroke="#eff1f3" strokeWidth="47" />
        <path d="M1550,1640 L1640,1480 Q1690,1435 1780,1450 L1920,1530 Q1960,1560 1930,1620z" fill="#e6ebf0" />

        <polyline points={ORANGE} stroke="#e0b65a" strokeWidth="96" />
        <polyline points={ORANGE} stroke="#ffce4d" strokeWidth="91" />

        <g strokeWidth="4" stroke="#b9bdc2">
          <polyline points="2110,1010 2050,1110 1960,1200 1890,1310 1770,1599" />
          <polyline points="2130,940 2050,1080 1980,1230 1930,1350 1880,1599" />
          <polyline points="2000,1040 1900,1190 1760,1400 1640,1599" />
        </g>
        <g strokeWidth="7" stroke="#8f9396" strokeDasharray="40 34">
          <polyline points="2110,960 2010,1130 1930,1240 1850,1390 1770,1599" />
          <polyline points="2130,940 2050,1080 1980,1230 1930,1350 1880,1599" />
          <polyline points="1960,1100 1860,1250 1760,1400 1690,1599" />
        </g>
        <polyline points="1990,1030 1920,1095 1780,1270 1690,1390 1615,1475" stroke="#9b9d9c" strokeWidth="19" />
        <polyline points="1910,1105 1780,1270 1690,1390 1625,1465" stroke="#ffffff" strokeWidth="14" strokeDasharray="54 50" />

        <polyline points={RAIL_TEAL} stroke="#8a9497" strokeWidth="17" />
        <polyline points={RAIL_TEAL} stroke="#4bc0c6" strokeWidth="12" />
        <polyline points={RAIL_BLUE} stroke="#9a9fae" strokeWidth="15" />
        <polyline points={RAIL_BLUE} stroke="#2c50bd" strokeWidth="11" />
        <polyline points="1605,1480 1535,1610" stroke="#ffbd28" strokeWidth="28" />
        <polyline points="1694,1535 1645,1620" stroke="#20b1b8" strokeWidth="42" />

        <g stroke="#d9d6c9" strokeWidth="22" strokeDasharray="8 9">
          <path d="M405,533H462M520,990H580M507,1010V1060M610,1000V1050M550,1083L608,1070M638,1380L682,1372" />
        </g>
        <g stroke="#e6dcae" strokeWidth="22" strokeDasharray="8 9">
          <path d="M2285,215l45-35M2295,270l85,22M2350,290l60-50M2572,435l60-36M2860,870l45-25M2830,985l35,40M2915,1030l35-30M2570,1365l45,30" />
        </g>
        <g stroke="#e8bd4f" strokeWidth="22" strokeDasharray="8 9">
          <path d="M1930,785l50,50M1530,1180l55,55M1155,1560l45,40" />
        </g>
        <g stroke="#e0ddd6" strokeWidth="22" strokeDasharray="8 9">
          <path d="M1200,965l30-38M1435,1255l75-72" />
        </g>
      </g>

      {CELLS.map((c, i) => (
        <g key={i} transform={cellShift(c)}>
          {c.icons.map(([kind, x, y], k) => (
            <g key={k} transform={`translate(${x} ${y})`}><MapIcon kind={kind} /></g>
          ))}
          <g textAnchor="middle" stroke="#ffffff" strokeWidth="5" strokeOpacity=".85" paintOrder="stroke" strokeLinejoin="round">
            {c.labels.map(([x, y, text, ink], k) => (
              <text key={k} x={x} y={y + 12} fontSize={ink === "n" ? 27 : 32.5} fill={INK[ink] || "#333333"}>{text}</text>
            ))}
          </g>
        </g>
      ))}

      <g fontSize="30" textAnchor="middle" stroke="#fff" strokeWidth="6" paintOrder="stroke">
        <text transform="translate(2580 200) rotate(-57)" fill="#22b0b8">경춘선</text>
        <text transform="translate(2378 432) rotate(-55)" fill="#2c50bd">1호선</text>
      </g>
      <g fontSize="26" textAnchor="middle" fill="#a09a70">
        <text transform="translate(2615 480) rotate(60)">전</text>
        <text transform="translate(2629 508) rotate(60)">농</text>
        <text transform="translate(2645 536) rotate(60)">로</text>
        <text transform="translate(3120 1385) rotate(60)">전</text>
      </g>
      <text transform="translate(1763 1468) rotate(25)" fontSize="30" textAnchor="middle" fill="#8d9093" stroke="#fff" strokeWidth="5" paintOrder="stroke">청량리역고가도로교</text>
      <text transform="translate(1678 1572) rotate(-60)" fontSize="30" textAnchor="middle" fill="#ffffff">량리</text>
      <ellipse cx="2421" cy="149" rx="28" ry="21" fill="#4167d8" />
      <text x="2421" y="159" fontSize="27" textAnchor="middle" fill="#fff">6</text>
      <ellipse cx="1617" cy="1139" rx="12" ry="9" fill="#f2dc9a" />
      <ellipse cx="1560" cy="1194" rx="14" ry="10" fill="#f2dc9a" />

      {CELLS.map((c, i) => (
        <g key={i} transform={cellShift(c)}>
          {c.stops.map(([x, y], k) => (
            <g key={k} transform={`translate(${x} ${y})`}><BusStop /></g>
          ))}
        </g>
      ))}

      <g transform="translate(1177 693)">
        <ellipse cx="0" cy="77" rx="9" ry="3" fill="#555" />
        <path d="M0 76C-4 48-36 32-36 0a36 36 0 0 1 72 0c0 32-32 48-36 76z" fill="#1b8bfa" />
        <circle r="19" fill="#fff" />
        <path d="M-7-4H7L0 5z" fill="#1b8bfa" />
      </g>

      <path d="M40 1552v15h126v-15" fill="none" stroke="#111" strokeWidth="3" />
      <text x="179" y="1575" fontSize="25" fontFamily="'Liberation Sans', sans-serif" fontWeight="700" fill="#111">60m</text>
      <text x="257" y="1579" fontSize="32" fontFamily="'Liberation Sans', sans-serif" fontWeight="700" fill="#111">kakao</text>
    </svg>
  );
}

/* -------------------------------- content ------------------------------- */

const ROWS = [
  ["번호", "678"],
  ["동", "청량리동"],
  ["아파트", "미주"],
  ["코드", "11230"],
  ["건축년도", "1978"],
  ["지번", "235-1"],
  ["위도", "37.5839977"],
  ["경도", "127.046747"],
  ["개인 맞춤 점수", "5.39"],
];

const SCORES = [
  { title: "총점 : 5.39 / 10.00", label: "5.39점 / 10.00점", pct: 53.9, color: "bg-[#007bff]" },
  { title: "공원 : 1.30 / 3.33", label: "1.30점 / 3.33점", pct: 39.04, color: "bg-[#28a745]" },
  { title: "지하철 1.90 / 3.33", label: "1.90점 / 3.33점", pct: 57, color: "bg-[#ffc107]" },
  { title: "직주거리 2.19 / 3.33", label: "2.19점 / 3.33점", pct: 65.7, color: "bg-[#17a2b8]" },
];

function Heading({ children }) {
  return (
    <h2 className="mb-2 h-12 text-center text-[40px] leading-[48px] tracking-[0.3px]">
      <Mixed>{children}</Mixed>
    </h2>
  );
}

function InfoTable() {
  return (
    <div className="border-b border-[#cbcbcb] text-center text-[16px]">
      <div className="grid h-[63px] grid-cols-2 items-center bg-[#6c757d] pb-[2px] font-medium text-white">
        <span>구분</span>
        <span>정보</span>
      </div>
      {ROWS.map(([name, value]) => (
        <div key={name} className="grid h-[45px] grid-cols-2 items-center pb-[2px] odd:bg-[#c5c5c5] even:bg-[#d4d4d4]">
          <span className="font-medium"><Mixed>{name}</Mixed></span>
          <span><Mixed>{value}</Mixed></span>
        </div>
      ))}
    </div>
  );
}

function ScoreBar({ title, label, pct, color }) {
  return (
    <div className="mb-[19px]">
      <h3 className="mb-2 h-[34px] text-center text-[28px] leading-[34px]"><Mixed>{title}</Mixed></h3>
      <div className="h-[30px] overflow-hidden rounded bg-[#e9ecef]">
        <div className={`flex h-full items-center justify-center pb-px text-[12px] text-white ${color}`} style={{ width: `${pct}%` }}>
          <Mixed>{label}</Mixed>
        </div>
      </div>
    </div>
  );
}

export default function App() {
  return (
    <div className={`h-[1370px] w-full overflow-hidden bg-[#d4d4d4] ${SANS}`}>
      <TabStrip />
      <Toolbar />
      <div className="h-[1281px] border-r-2 border-[#f1f1f1] text-[#2c3e50]">
        <NavBar />
        <main className="pt-16">
          <div className="mx-[214px] grid grid-cols-2 gap-[29px]">
            <section>
              <Heading>매물 정보</Heading>
              <InfoTable />
            </section>
            <section>
              <Heading>매물 위치</Heading>
              <div className="-mt-px"><LocationMap /></div>
            </section>
          </div>
          <section className="mx-auto mt-[69px] w-[827px]">
            <Heading>개인 맞춤 점수</Heading>
            <div className="pt-[33px]">
              {SCORES.map((s) => <ScoreBar key={s.label} {...s} />)}
            </div>
          </section>
        </main>
      </div>
    </div>
  );
}
